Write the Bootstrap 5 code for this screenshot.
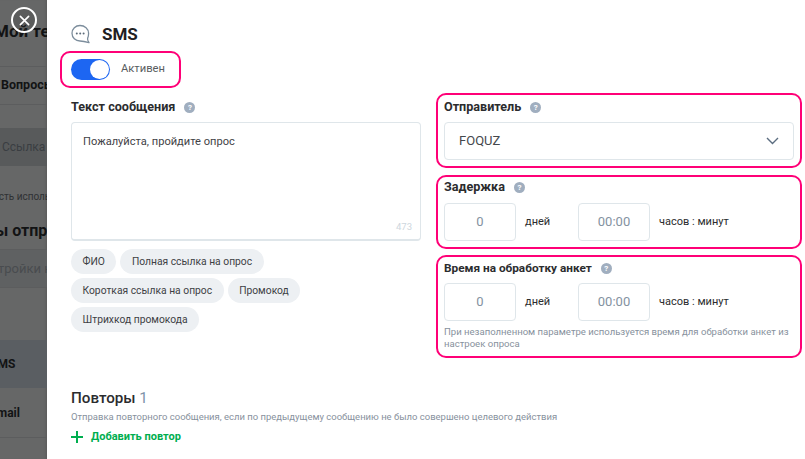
<!DOCTYPE html>
<html lang="en">
<head>
    <meta charset="UTF-8">
    <meta name="viewport" content="width=device-width, initial-scale=1.0">
    <title>SMS</title>
    <link href="https://cdn.jsdelivr.net/npm/bootstrap@5.3.0/dist/css/bootstrap.min.css" rel="stylesheet">
    <style>
        html, body {
            height: 459px;
            overflow: hidden;
        }
        body {
            font-family: Roboto, "Liberation Sans", sans-serif;
            color: #2e2f31;
            background: #fff;
        }
        .page-shell {
            height: 459px;
        }

        /* dimmed page behind the side sheet */
        .back-strip {
            width: 47px;
            flex-shrink: 0;
            overflow: hidden;
            background: #666767;
            color: #121314;
            white-space: nowrap;
            font-weight: 700;
            box-shadow: inset -3px 0 3px -2px rgba(0,0,0,.12);
        }
        .back-row {
            display: flex;
            align-items: center;
            border-bottom: 1px solid #5c5d5e;
        }
        .back-row.r-title { height: 67px; align-items: flex-end; padding-bottom: 23px; font-size: 17px; margin-left: -6px; border: 0; }
        .back-title-wrap { border-bottom: 1px solid #5c5d5e; height: 67px; }
        .back-row.r-quest { height: 38px; font-size: 12.5px; padding-left: 1px; }
        .back-row.r-gap { height: 23px; border: 0; }
        .back-row.r-link { height: 38px; font-size: 12px; font-weight: 400; padding-left: 2px; background: #585a5b; color: #3a3e42; border: 0; }
        .back-row.r-note { height: 47px; font-size: 10px; font-weight: 400; color: #2f3133; margin-left: -7px; padding-top: 14px; border: 0; }
        .back-row.r-head { height: 37px; font-size: 16px; margin-left: -5px; }
        .back-row.r-setup { height: 38px; font-size: 13px; font-weight: 400; color: #494c4f; background: #5f6162; margin-left: -2px; }
        .back-row.r-n { height: 52px; font-size: 12px; margin-left: -7px; padding-top: 18px; border: 0; }
        .back-row.r-sms { height: 48px; font-size: 12px; margin-left: -10px; background: #5a5e62; border: 0; }
        .back-row.r-mail { height: 50px; font-size: 12px; margin-left: -10px; }

        .close-btn {
            position: absolute;
            left: 11px;
            top: 7px;
            width: 26px;
            height: 26px;
            padding: 0;
            border: 2px solid #fff;
            border-radius: 50%;
            background: rgba(60,60,60,.25);
            display: flex;
            align-items: center;
            justify-content: center;
        }

        .sheet {
            flex: 1;
            min-width: 0;
            padding: 24px 0 0 24px;
            background: #fff;
        }
        .sheet-title {
            font-size: 17px;
            font-weight: 700;
            line-height: 20px;
            color: #1f2022;
            margin: 0;
        }
        .pink-box {
            border: 2px solid #ff0077;
            border-radius: 10px;
        }
        .state-box {
            width: 121px;
            height: 37px;
            margin: 7px 0 0 -11px;
            padding-left: 9px;
        }
        .fake-toggle {
            width: 39px;
            height: 21px;
            border-radius: 11px;
            background: #1d66f2;
            position: relative;
            flex-shrink: 0;
        }
        .fake-toggle::after {
            content: "";
            position: absolute;
            right: 1px;
            top: 1px;
            width: 19px;
            height: 19px;
            border-radius: 50%;
            background: #fff;
        }
        .state-label {
            font-size: 11.2px;
            color: #585c60;
            margin-left: 11px;
        }

        .col-left { width: 350px; flex-shrink: 0; padding-top: 11px; }
        .col-right { width: 366px; flex-shrink: 0; margin-left: 15px; }
        .field-label {
            font-size: 12.6px;
            font-weight: 700;
            line-height: 16px;
            color: #2b2c2e;
        }
        .field-label-sm { font-size: 11.8px; }
        .help-dot {
            width: 11px;
            height: 11px;
            border-radius: 50%;
            background: #a0aebf;
            color: #fff;
            font-size: 8px;
            font-weight: 700;
            line-height: 11px;
            text-align: center;
            margin-left: 9px;
            flex-shrink: 0;
        }
        .msg-box {
            height: 119px;
            margin-top: 7px;
            border: 1px solid #dfe6ea;
            border-bottom-width: 2px;
            border-radius: 4px;
            padding: 11px 11px;
            font-size: 11.1px;
            line-height: 16px;
            color: #3f4246;
            position: relative;
        }
        .msg-count {
            position: absolute;
            right: 8px;
            bottom: 6px;
            font-size: 9.5px;
            line-height: 12px;
            color: #ced7de;
        }
        .chip-list {
            max-width: 240px;
            margin-top: 8px;
            gap: 4px;
        }
        .chip-item {
            height: 25px;
            padding: 0 11.500px;
            border-radius: 13px;
            background: #edf0f3;
            font-size: 10.300px;
            line-height: 25px;
            color: #3d4044;
        }

        .side-box { padding: 3px 6px 0 6px; }
        .box-sender { height: 75px; margin-top: 5px; padding-top: 4px; }
        .box-delay { height: 74px; margin-top: 7px; padding-top: 2px; }
        .box-process { height: 103px; margin-top: 6px; }
        .sender-select {
            height: 38px;
            margin-top: 7px;
            padding: 0 14px;
            border: 1px solid #dfe6ea;
            border-radius: 4px;
            font-size: 13px;
            color: #45484c;
        }
        .time-row { margin-top: 8px; font-size: 11px; color: #2b2c2e; }
        .box-process .time-row { margin-top: 7px; }
        .time-input {
            width: 72px;
            height: 38px;
            border: 1px solid #dfe6ea;
            border-radius: 4px;
            font-size: 13px;
            line-height: 36px;
            text-align: center;
            color: #84929f;
        }
        .unit-days { width: 62px; padding-left: 9px; }
        .unit-time { padding-left: 9px; }
        .hint-text {
            margin-top: 5px;
            font-size: 9.550px;
            line-height: 12px;
            color: #87919d;
        }

        .repeat-head {
            margin-top: 56px;
            font-size: 15.200px;
            font-weight: 500;
            line-height: 20px;
            color: #2b2c2e;
        }
        .repeat-num { color: #7f93a8; font-weight: 400; }
        .repeat-sub {
            margin-top: 2px;
            font-size: 9.470px;
            line-height: 14px;
            color: #87919d;
        }
        .add-repeat {
            margin-top: 6px;
            font-size: 11px;
            font-weight: 700;
            line-height: 14px;
            color: #00ae4f;
        }
    </style>
</head>
<body>
    <div class="page-shell d-flex position-relative">
        <!-- page behind the sheet -->
        <div class="back-strip">
            <div class="back-title-wrap"><div class="back-row r-title">Мой тест</div></div>
            <div class="back-row r-quest">Вопросы</div>
            <div class="back-row r-gap"></div>
            <div class="back-row r-link">Ссылка</div>
            <div class="back-row r-note">ость использования</div>
            <div class="back-row r-head">ы отправки</div>
            <div class="back-row r-setup">тройки канала</div>
            <div class="back-row r-n">н</div>
            <div class="back-row r-sms">SMS</div>
            <div class="back-row r-mail">Email</div>
        </div>

        <button type="button" class="close-btn" aria-label="Close">
            <svg width="11" height="11" viewBox="0 0 12 12"><path d="M1.500 1.500l9 9M10.500 1.500l-9 9" stroke="#fff" stroke-width="1.800" stroke-linecap="round"/></svg>
        </button>

        <div class="sheet">
            <div class="d-flex align-items-center">
                <svg width="19" height="20" viewBox="0 0 19 20" fill="none">
                    <path d="M9 1.500C4.500 1.500 1 4.900 1 9.300S4.500 17 9 17c2.600 0 5.700.7 9 1.700-1.200-1.700-1.700-3-1.400-4.300.7-1.400 1-3.100 1-5.100C17.600 4.900 13.700 1.500 9 1.500z" stroke="#7c8d9c" stroke-width="1.300" stroke-linejoin="round"/>
                    <circle cx="5.800" cy="9.400" r="1" fill="#5d6c7a"/>
                    <circle cx="9.200" cy="9.400" r="1" fill="#5d6c7a"/>
                    <circle cx="12.600" cy="9.400" r="1" fill="#5d6c7a"/>
                </svg>
                <h1 class="sheet-title ms-2 ps-1">SMS</h1>
            </div>

            <div class="pink-box state-box d-flex align-items-center">
                <span class="fake-toggle"></span>
                <span class="state-label">Активен</span>
            </div>

            <div class="d-flex align-items-start">
                <div class="col-left">
                    <div class="d-flex align-items-center field-label">Текст сообщения <span class="help-dot">?</span></div>
                    <div class="msg-box">
                        Пожалуйста, пройдите опрос
                        <span class="msg-count">473</span>
                    </div>
                    <div class="d-flex flex-wrap chip-list">
                        <span class="chip-item">ФИО</span>
                        <span class="chip-item">Полная ссылка на опрос</span>
                        <span class="chip-item">Короткая ссылка на опрос</span>
                        <span class="chip-item">Промокод</span>
                        <span class="chip-item">Штрихкод промокода</span>
                    </div>
                    <div class="repeat-head">Повторы <span class="repeat-num">1</span></div>
                </div>

                <div class="col-right">
                    <div class="pink-box side-box box-sender">
                        <div class="d-flex align-items-center field-label">Отправитель <span class="help-dot">?</span></div>
                        <div class="sender-select d-flex align-items-center justify-content-between">
                            <span>FOQUZ</span>
                            <svg width="13" height="8" viewBox="0 0 13 8" fill="none"><path d="M1 1l5.500 5.500L12 1" stroke="#5b6d80" stroke-width="1.400"/></svg>
                        </div>
                    </div>
                    <div class="pink-box side-box box-delay">
                        <div class="d-flex align-items-center field-label">Задержка <span class="help-dot">?</span></div>
                        <div class="time-row d-flex align-items-center">
                            <div class="time-input">0</div>
                            <span class="unit-days">дней</span>
                            <div class="time-input">00:00</div>
                            <span class="unit-time">часов : минут</span>
                        </div>
                    </div>
                    <div class="pink-box side-box box-process">
                        <div class="d-flex align-items-center field-label field-label-sm">Время на обработку анкет <span class="help-dot">?</span></div>
                        <div class="time-row d-flex align-items-center">
                            <div class="time-input">0</div>
                            <span class="unit-days">дней</span>
                            <div class="time-input">00:00</div>
                            <span class="unit-time">часов : минут</span>
                        </div>
                        <div class="hint-text">При незаполненном параметре используется время для обработки анкет из настроек опроса</div>
                    </div>
                </div>
            </div>

            <div class="repeat-sub text-nowrap">Отправка повторного сообщения, если по предыдущему сообщению не было совершено целевого действия</div>
            <div class="add-repeat d-flex align-items-center">
                <svg class="me-2" width="12" height="12" viewBox="0 0 12 12"><path d="M6 0v12M0 6h12" stroke="#00ae4f" stroke-width="2"/></svg>
                Добавить повтор
            </div>
        </div>
    </div>

    <script src="https://cdn.jsdelivr.net/npm/bootstrap@5.3.0/dist/js/bootstrap.bundle.min.js"></script>
</body>
</html>
